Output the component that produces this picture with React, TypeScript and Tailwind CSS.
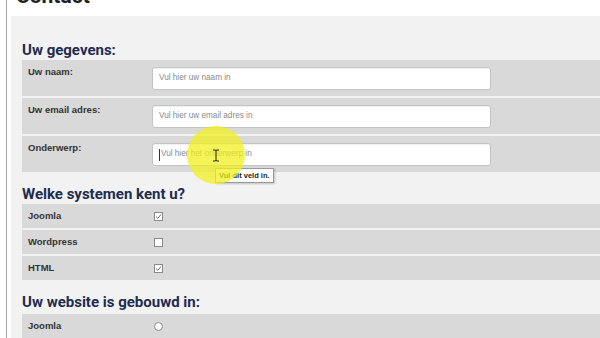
import React from "react";

type TextField = { label: string; placeholder: string; caret?: boolean };

const textFields: TextField[] = [
  { label: "Uw naam:", placeholder: "Vul hier uw naam in" },
  { label: "Uw email adres:", placeholder: "Vul hier uw email adres in" },
  { label: "Onderwerp:", placeholder: "Vul hier het onderwerp in", caret: true },
];

const systems = [
  { label: "Joomla", checked: true },
  { label: "Wordpress", checked: false },
  { label: "HTML", checked: true },
];

const arial = { fontFamily: "'Liberation Sans', Arial, sans-serif" };

function Checkbox({ checked }: { checked: boolean }) {
  return (
    <span className="flex h-[9px] w-[9px] items-center justify-center border border-[#8a8a8a] bg-white">
      {checked ? (
        <svg viewBox="0 0 10 10" className="h-[7px] w-[7px]">
          <path d="M1.5 5.2 L4 7.6 L8.6 2.2" fill="none" stroke="#6b6b6b" strokeWidth="1.4" />
        </svg>
      ) : null}
    </span>
  );
}

function Radio() {
  return <span className="block h-[9px] w-[9px] rounded-full border border-[#8a8a8a] bg-white" />;
}

function Heading({ children, className = "" }: { children: React.ReactNode; className?: string }) {
  return (
    <h2 className={`text-[15px] leading-[20px] font-bold text-[#1e2c4f] ${className}`}>{children}</h2>
  );
}

export default function App() {
  return (
    <div
      className="relative h-[338px] w-[600px] overflow-hidden bg-white"
      style={{ fontFamily: "Roboto, 'Liberation Sans', sans-serif" }}
    >
      <div className="ml-[6px] flex h-full flex-col border-l border-[#a3a3a3]">
        <div className="h-[16px] overflow-hidden pl-[9px]">
          <h1 className="-mt-[15px] text-[21px] leading-[22px] font-bold text-[#222]">Contact</h1>
        </div>

        <section className="ml-[4px] flex-1 bg-[#f2f2f2] pt-[24px] pl-[11px]">
          <Heading>Uw gegevens:</Heading>
          <div className="flex flex-col gap-[2px]">
            {textFields.map((f) => (
              <div key={f.label} className="flex h-[36px] bg-[#d9d9d9]">
                <div
                  className="w-[130px] pt-[5px] pl-[6px] text-[9.5px] leading-[14px] font-bold text-[#333]"
                  style={arial}
                >
                  {f.label}
                </div>
                <div className="pt-[7px]">
                  <div
                    className="relative flex h-[23px] w-[339px] items-center rounded-[3px] border border-[#c4c4c4] bg-white pl-[6px] text-[8.2px] text-[#8a8a8a] shadow-[inset_0_1px_1px_rgba(0,0,0,0.06)]"
                    style={arial}
                  >
                    {f.caret ? <span className="mr-[1px] h-[12px] w-px bg-[#333]" /> : null}
                    {f.placeholder}
                  </div>
                </div>
              </div>
            ))}
          </div>

          <Heading className="mt-[12px]">Welke systemen kent u?</Heading>
          <div className="flex flex-col gap-[2px]">
            {systems.map((s) => (
              <div key={s.label} className="flex h-[24px] items-center bg-[#d9d9d9]">
                <div className="w-[132px] pl-[6px] text-[9.5px] font-bold text-[#333]" style={arial}>
                  {s.label}
                </div>
                <Checkbox checked={s.checked} />
              </div>
            ))}
          </div>

          <Heading className="mt-[12px] mb-[2px]">Uw website is gebouwd in:</Heading>
          <div className="flex h-[24px] items-center bg-[#d9d9d9]">
            <div className="w-[132px] pl-[6px] text-[9.5px] font-bold text-[#333]" style={arial}>
              Joomla
            </div>
            <Radio />
          </div>
        </section>
      </div>

      {/* validation tooltip */}
      <div
        className="absolute top-[168px] left-[215px] border border-[#9a9a9a] bg-white px-[3px] py-[1px] text-[7.5px] leading-[11px] font-bold text-[#222] shadow-[1px_1px_2px_rgba(0,0,0,0.2)]"
        style={arial}
      >
        Vul dit veld in.
      </div>

      {/* cursor highlight */}
      <div className="pointer-events-none absolute top-[126px] left-[187px] h-[58px] w-[58px] rounded-full bg-[#f0f020]/75" />
      <svg className="absolute top-[149px] left-[212px]" width="8" height="13" viewBox="0 0 8 13">
        <path d="M1 1 H3 Q4 1 4 2 V11 Q4 12 3 12 H1 M7 1 H5 Q4 1 4 2 M4 11 Q4 12 5 12 H7" fill="none" stroke="#222" strokeWidth="1" />
      </svg>
    </div>
  );
}
